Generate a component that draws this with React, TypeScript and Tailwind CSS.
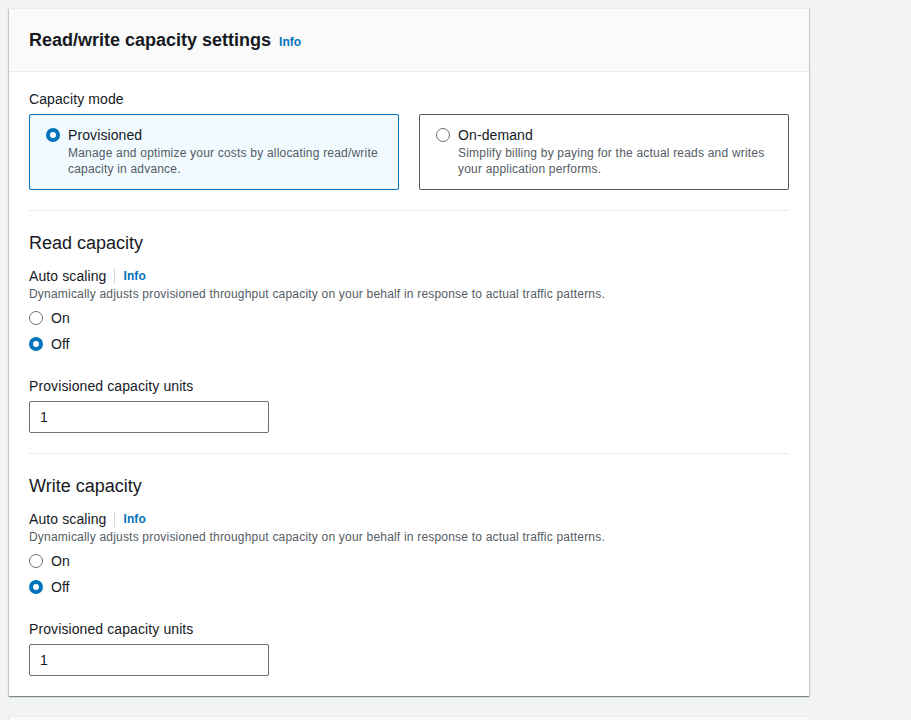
import React from "react";

const font = { fontFamily: "'Liberation Sans', Arial, sans-serif" };

function Radio({ checked }: { checked: boolean }) {
  return checked ? (
    <span className="block box-border w-[14px] h-[14px] rounded-full border-[4px] border-[#0073bb] bg-white shrink-0" />
  ) : (
    <span className="block box-border w-[14px] h-[14px] rounded-full border-[1.5px] border-[#687078] bg-white shrink-0" />
  );
}

function Tile({ checked, title, desc }: { checked: boolean; title: string; desc: string }) {
  return (
    <div
      className={
        checked
          ? "flex-1 h-[76px] border border-[#0073bb] bg-[#f1faff] rounded-[2px] pl-[16px] pr-[18px] pt-[10px]"
          : "flex-1 h-[76px] border border-[#545b64] bg-white rounded-[2px] pl-[16px] pr-[18px] pt-[10px]"
      }
    >
      <div className="flex gap-[8px]">
        <div className="pt-[3px]">
          <Radio checked={checked} />
        </div>
        <div>
          <div className="text-[14px] leading-[20px] tracking-[0.1px] text-[#16191f]">{title}</div>
          <div className="text-[12px] leading-[16px] tracking-[0.2px] text-[#545b64]">{desc}</div>
        </div>
      </div>
    </div>
  );
}

function Capacity({ title }: { title: string }) {
  return (
    <div>
      <div className="text-[18px] leading-[22px] text-[#16191f] pt-[21px]">{title}</div>
      <div className="mt-[12px] flex items-center text-[14px] leading-[20px] tracking-[0.1px] text-[#16191f]">
        <span>Auto scaling</span>
        <span className="mx-[8px] h-[16px] w-px bg-[#d5dbdb]" />
        <span className="text-[12px] font-bold text-[#0073bb]">Info</span>
      </div>
      <div className="text-[12px] leading-[16px] tracking-[0.2px] text-[#545b64]">
        Dynamically adjusts provisioned throughput capacity on your behalf in response to actual traffic patterns.
      </div>
      <div className="mt-[6px] flex flex-col gap-[6px]">
        <div className="flex items-center gap-[8px] h-[20px]">
          <Radio checked={false} />
          <span className="text-[14px] text-[#16191f]">On</span>
        </div>
        <div className="flex items-center gap-[8px] h-[20px]">
          <Radio checked={true} />
          <span className="text-[14px] text-[#16191f]">Off</span>
        </div>
      </div>
      <div className="mt-[22px] text-[14px] leading-[20px] tracking-[0.1px] text-[#16191f]">Provisioned capacity units</div>
      <div className="mt-[5px] w-[240px] h-[32px] border border-[#687078] rounded-[2px] flex items-center pl-[10px] text-[14px] text-[#16191f]">
        1
      </div>
    </div>
  );
}

export default function App() {
  return (
    <div className="min-h-[720px] bg-[#f2f3f3] pt-[8px] pl-[9px] overflow-hidden" style={font}>
      <div className="w-[800px] bg-white shadow-[0_1px_1px_0_rgba(0,28,36,0.3),1px_1px_1px_0_rgba(0,28,36,0.15),-1px_1px_1px_0_rgba(0,28,36,0.15)] border-t border-[#eaeded]">
        <div className="h-[63px] bg-[#fafafa] border-b border-[#eaeded] px-[20px] flex items-center">
          <div className="flex items-baseline">
            <h2 className="text-[18px] font-bold text-[#16191f] leading-[22px]">Read/write capacity settings</h2>
            <span className="ml-[8px] text-[12px] font-bold text-[#0073bb]">Info</span>
          </div>
        </div>
        <div className="px-[20px] pt-[17px] pb-[20px]">
          <div className="text-[14px] leading-[20px] tracking-[0.1px] text-[#16191f]">Capacity mode</div>
          <div className="mt-[5px] flex gap-[20px]">
            <Tile
              checked={true}
              title="Provisioned"
              desc="Manage and optimize your costs by allocating read/write capacity in advance."
            />
            <Tile
              checked={false}
              title="On-demand"
              desc="Simplify billing by paying for the actual reads and writes your application performs."
            />
          </div>
          <div className="mt-[20px] border-t border-[#eaeded]" />
          <Capacity title="Read capacity" />
          <div className="mt-[20px] border-t border-[#eaeded]" />
          <Capacity title="Write capacity" />
        </div>
      </div>
      <div className="mt-[20px] w-[800px] h-[40px] bg-[#fafafa] border-t border-[#eaeded] shadow-[0_1px_1px_0_rgba(0,28,36,0.3)]" />
    </div>
  );
}
